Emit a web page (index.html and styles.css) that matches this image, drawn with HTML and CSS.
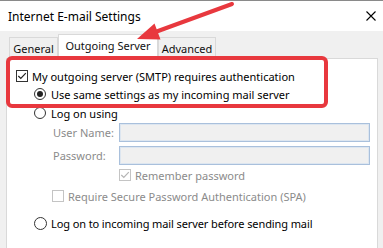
FILE: index.html
```html
<!DOCTYPE html>
<html lang="en">
<head>
    <meta charset="UTF-8">
    <title>Internet E-mail Settings</title>
    <link rel="stylesheet" href="styles.css">
</head>
<body>
    <div class="window">
        <div class="titlebar">
            <span class="title">Internet E-mail Settings</span>
            <svg class="close" width="10" height="10" viewBox="0 0 10 10">
                <path d="M0.5 0.5 L9.5 9.5 M9.5 0.5 L0.5 9.5" stroke="#000" stroke-width="1.1" fill="none"/>
            </svg>
        </div>

        <div class="dialog">
            <div class="tabs">
                <div class="tab tab-general">General</div>
                <div class="tab tab-outgoing active">Outgoing Server</div>
                <div class="tab tab-advanced">Advanced</div>
            </div>

            <div class="panel">
                <!-- zone encadrée en rouge -->
                <div class="highlight">
                    <div class="option">
                        <svg class="box" width="12" height="12" viewBox="0 0 12 12">
                            <rect x="0.5" y="0.5" width="11" height="11" fill="#fff" stroke="#333"/>
                            <path d="M2.3 6 L4.8 8.5 L9.8 3.2" stroke="#222" stroke-width="1.2" fill="none"/>
                        </svg>
                        <span>My outgoing server (SMTP) requires authentication</span>
                    </div>
                    <div class="option radio-indent">
                        <svg class="box" width="12" height="12" viewBox="0 0 12 12">
                            <circle cx="6" cy="6" r="5.5" fill="#fff" stroke="#333"/>
                            <circle cx="6" cy="6" r="3" fill="#222"/>
                        </svg>
                        <span>Use same settings as my incoming mail server</span>
                    </div>
                </div>

                <div class="option option-logon">
                    <svg class="box" width="12" height="12" viewBox="0 0 12 12">
                        <circle cx="6" cy="6" r="5.5" fill="#fff" stroke="#333"/>
                    </svg>
                    <span>Log on using</span>
                </div>

                <div class="field">
                    <label>User Name:</label>
                    <div class="input"></div>
                </div>
                <div class="field">
                    <label>Password:</label>
                    <div class="input"></div>
                </div>

                <div class="option option-remember disabled">
                    <svg class="box" width="12" height="12" viewBox="0 0 12 12">
                        <rect x="0.5" y="0.5" width="11" height="11" fill="#fff" stroke="#c4c4c4"/>
                        <path d="M2.3 6 L4.8 8.5 L9.8 3.2" stroke="#b5b5b5" stroke-width="1.2" fill="none"/>
                    </svg>
                    <span>Remember password</span>
                </div>
                <div class="option option-spa disabled">
                    <svg class="box" width="12" height="12" viewBox="0 0 12 12">
                        <rect x="0.5" y="0.5" width="11" height="11" fill="#fff" stroke="#c4c4c4"/>
                    </svg>
                    <span>Require Secure Password Authentication (SPA)</span>
                </div>

                <div class="option option-incoming">
                    <svg class="box" width="13" height="13" viewBox="0 0 13 13">
                        <circle cx="6.5" cy="6.5" r="6" fill="#fff" stroke="#333"/>
                    </svg>
                    <span>Log on to incoming mail server before sending mail</span>
                </div>
            </div>
        </div>

        <!-- flèche d'annotation -->
        <svg class="arrow" width="383" height="248" viewBox="0 0 383 248">
            <line x1="232" y1="4" x2="154" y2="32.5" stroke="#e8383e" stroke-width="4" stroke-linecap="round"/>
            <polygon points="137,39 160.5,39.5 154.5,23.5" fill="#e8383e"/>
        </svg>
    </div>
</body>
</html>
```

FILE: styles.css
```css
body {
    margin: 0;
    font-family: "Noto Sans", sans-serif;
    font-size: 11px;
    color: #000;
    background: #f0f0f0;
}
.window {
    position: relative;
    width: 383px;
    height: 248px;
    overflow: hidden;
}
.titlebar {
    height: 30px;
    border-top: 1px solid #8a8a8a;
    background: #fff;
    display: flex;
    align-items: center;
    justify-content: space-between;
    padding: 0 7px 0 8px;
}
.title {
    font-size: 12px;
}
.dialog {
    padding: 3px 5px 0 6px;
}
.tabs {
    display: flex;
    align-items: flex-end;
    height: 24px;
    padding-left: 3px;
}
.tab {
    box-sizing: border-box;
    height: 21px;
    border: 1px solid #d9d9d9;
    border-bottom: none;
    background: #f0f0f0;
    display: flex;
    align-items: center;
    justify-content: center;
    white-space: nowrap;
    color: #111;
}
.tab-general {
    width: 49px;
}
.tab-outgoing {
    width: 100px;
}
.tab-advanced {
    width: 58px;
}
.tab.active {
    height: 25px;
    padding-bottom: 3px;
    margin-bottom: -1px;
    background: #fff;
    position: relative;
    z-index: 1;
}
.panel {
    box-sizing: border-box;
    background: #fff;
    border: 1px solid #d9d9d9;
    border-bottom: none;
    height: 200px;
}
.highlight {
    box-sizing: border-box;
    width: 322px;
    height: 52px;
    margin: -3px 0 0 -1px;
    padding: 7px 0 0 6px;
    border: 4px solid #e8383e;
    border-radius: 6px;
    position: relative;
    z-index: 2;
}
.option {
    display: flex;
    align-items: center;
    height: 18px;
    gap: 4px;
    white-space: nowrap;
}
.option .box {
    flex-shrink: 0;
}
.radio-indent {
    margin-left: 18px;
    gap: 5px;
}
.option-logon {
    height: 12px;
    margin-top: -1px;
    padding-left: 27px;
    gap: 5px;
}
.field {
    display: flex;
    align-items: center;
    height: 19px;
    margin-top: 4px;
    padding-left: 46px;
}
.field:first-of-type {
    margin-top: 5px;
}
.field label {
    width: 66px;
    color: #8b8b8b;
}
.input {
    box-sizing: border-box;
    width: 251px;
    height: 19px;
    background: #f0f0f0;
    border: 1px solid #a9c0dc;
    box-shadow: inset 0 0 0 1px #dde6f0;
}
.disabled {
    color: #8b8b8b;
}
.option-remember {
    height: 12px;
    margin-top: 4px;
    padding-left: 112px;
}
.option-spa {
    height: 12px;
    margin-top: 9px;
    padding-left: 45px;
}
.option-incoming {
    height: 13px;
    margin-top: 15px;
    padding-left: 27px;
    gap: 4px;
    letter-spacing: -0.1px;
}
.arrow {
    position: absolute;
    top: 0;
    left: 0;
    pointer-events: none;
    z-index: 3;
}
```
